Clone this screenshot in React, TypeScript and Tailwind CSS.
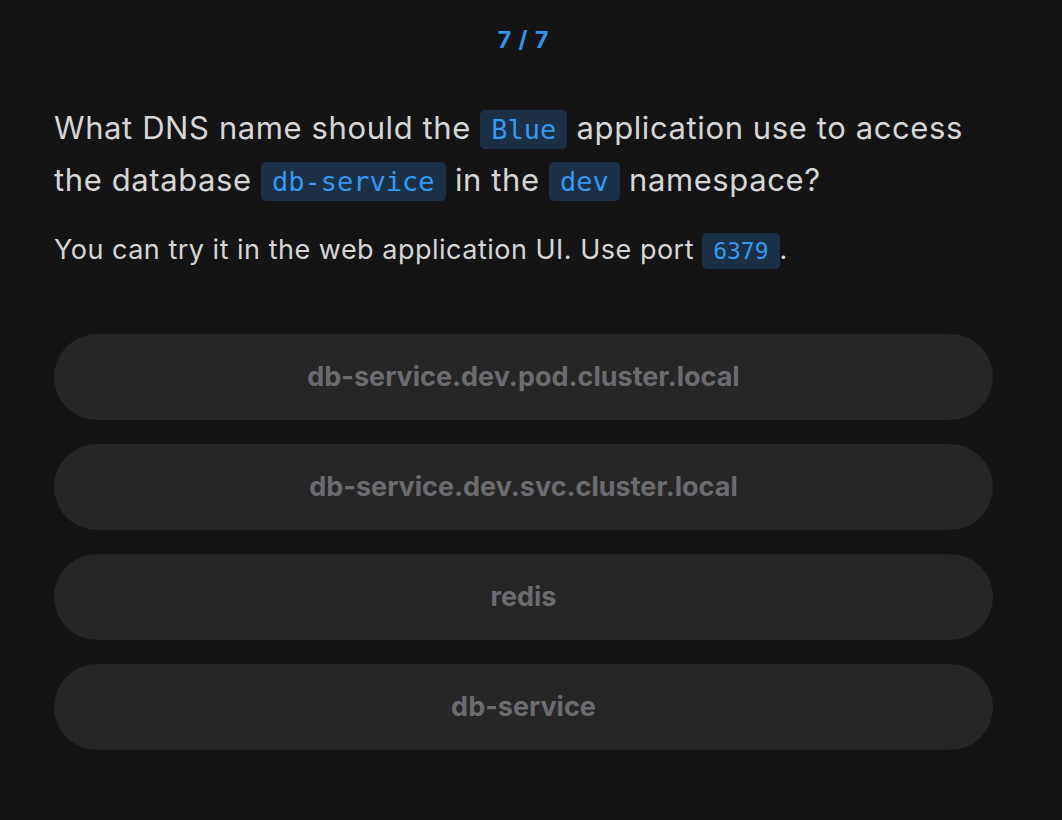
import React from "react";

const Code = ({ children }: { children: React.ReactNode }) => (
  <code className="rounded-[5px] bg-[#1b2f45] px-[11px] py-[4px] font-['DejaVu_Sans_Mono',monospace] text-[27px] tracking-normal text-[#3399f3]">
    {children}
  </code>
);

const options = [
  "db-service.dev.pod.cluster.local",
  "db-service.dev.svc.cluster.local",
  "redis",
  "db-service",
];

export default function App() {
  return (
    <div className="min-h-[820px] w-full bg-[#141414] font-['Inter',sans-serif]">
      <div className="pl-[54px] pr-[69px] pt-[24px]">
        <p className="text-center text-[23px] font-bold leading-[32px] tracking-[1px] text-[#2f95f0]">
          7 / 7
        </p>
        <p className="mt-[47px] text-[31px] leading-[50px] tracking-[0.6px] text-[#d6d6d6]">
          What DNS name should the <Code>Blue</Code> application use to access
          the database <Code>db-service</Code> in the <Code>dev</Code> namespace?
        </p>
        <p className="mt-[25px] text-[27px] leading-[36px] tracking-[0.5px] text-[#d6d6d6]">
          You can try it in the web application UI. Use port{" "}
          <code className="rounded-[5px] bg-[#1b2f45] px-[11px] py-[5px] font-['DejaVu_Sans_Mono',monospace] text-[23px] tracking-normal text-[#3399f3]">
            6379
          </code>
          .
        </p>
        <div className="mt-[65px] flex flex-col gap-[24px]">
          {options.map((o) => (
            <button
              key={o}
              className="flex h-[86px] w-full items-center justify-center rounded-full bg-[#262626] text-[27px] font-bold text-[#6c6c70]"
            >
              {o}
            </button>
          ))}
        </div>
      </div>
    </div>
  );
}
